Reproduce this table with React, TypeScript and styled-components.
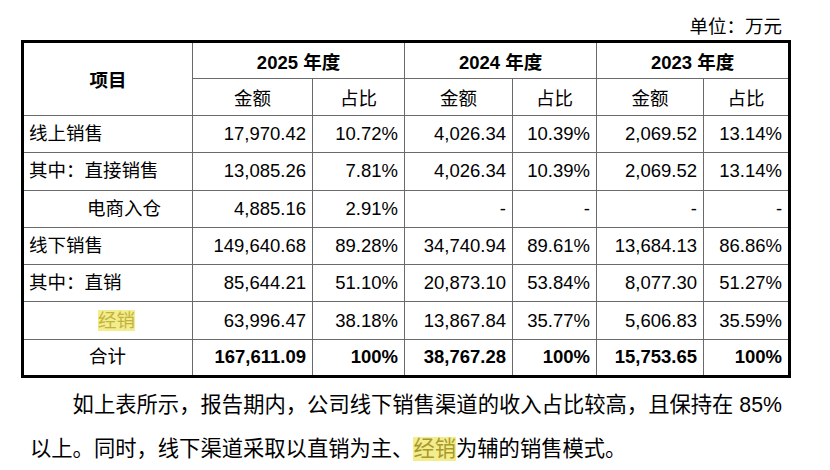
import { ReactNode } from "react";
import styled, { createGlobalStyle } from "styled-components";

type Row = {
  label: string;
  indent?: number;
  highlight?: boolean;
  center?: boolean;
  bold?: boolean;
  values: string[];
};

const rows: Row[] = [
  { label: "线上销售", values: ["17,970.42", "10.72%", "4,026.34", "10.39%", "2,069.52", "13.14%"] },
  { label: "其中：直接销售", values: ["13,085.26", "7.81%", "4,026.34", "10.39%", "2,069.52", "13.14%"] },
  { label: "电商入仓", indent: 63, values: ["4,885.16", "2.91%", "-", "-", "-", "-"] },
  { label: "线下销售", values: ["149,640.68", "89.28%", "34,740.94", "89.61%", "13,684.13", "86.86%"] },
  { label: "其中：直销", values: ["85,644.21", "51.10%", "20,873.10", "53.84%", "8,077.30", "51.27%"] },
  { label: "经销", indent: 74, highlight: true, values: ["63,996.47", "38.18%", "13,867.84", "35.77%", "5,606.83", "35.59%"] },
  { label: "合计", center: true, bold: true, values: ["167,611.09", "100%", "38,767.28", "100%", "15,753.65", "100%"] },
];

const years = ["2025", "2024", "2023"];
const widths = [170, 120, 92, 108, 84, 107, 86];

const GlobalStyle = createGlobalStyle`
  body {
    margin: 0;
    background: #ffffff;
    color: #000000;
    font-family: "Liberation Sans", "Noto Sans CJK SC", sans-serif;
  }
`;

const Page = styled.div`
  width: 830px;
  height: 470px;
  padding: 16px 0 0 21px;
  box-sizing: border-box;
  overflow: hidden;
`;

const Unit = styled.div`
  width: 761px;
  text-align: right;
  font-size: 18.5px;
  line-height: 22px;
  margin-bottom: 2px;
`;

const Table = styled.table`
  border-collapse: collapse;
  table-layout: fixed;
  width: 767px;
  border: 3px solid #000;
  font-size: 18.5px;
`;

const Cell = styled.td<{ $align?: string; $bold?: boolean; $indent?: number }>`
  border: 1px solid #6a6a6a;
  height: 37.3px;
  padding: 0 6px 0 ${(p) => (p.$indent ? p.$indent : 5)}px;
  text-align: ${(p) => p.$align || "right"};
  font-weight: ${(p) => (p.$bold ? 700 : 400)};
  white-space: nowrap;
  box-sizing: border-box;
  line-height: 22px;
`;

const HeadCell = styled.th<{ $bold?: boolean }>`
  border: 1px solid #6a6a6a;
  height: 37px;
  padding: 0;
  text-align: center;
  font-weight: ${(p) => (p.$bold ? 700 : 400)};
  box-sizing: border-box;
`;

const Mark = styled.span<{ $light?: boolean }>`
  background: #f3ed8e;
  color: ${(p) => (p.$light ? "#c2b33c" : "#a8992c")};
`;

// full-width CJK punctuation keeps a whole em, as in the source document
const Punct = styled.span`
  display: inline-block;
  width: 1em;
  text-indent: 0;
  text-align: left;
`;

const Paragraph = styled.p`
  width: 752px;
  margin: 5px 0 0 9px;
  font-size: 21.3px;
  line-height: 44px;
  text-indent: 2em;
  text-align: justify;
`;

function cjk(text: string): ReactNode[] {
  return text.split(/([：，。、])/).map((part, i) =>
    /^[：，。、]$/.test(part) ? <Punct key={i}>{part}</Punct> : part
  );
}

export default function App() {
  return (
    <Page lang="zh-CN">
      <GlobalStyle />
      <Unit>{cjk("单位：万元")}</Unit>
      <Table>
        <colgroup>
          {widths.map((w, i) => (
            <col key={i} style={{ width: w }} />
          ))}
        </colgroup>
        <thead>
          <tr>
            <HeadCell rowSpan={2} $bold>
              项目
            </HeadCell>
            {years.map((y) => (
              <HeadCell key={y} colSpan={2} $bold>
                {y} 年度
              </HeadCell>
            ))}
          </tr>
          <tr>
            {years.map((y) => [
              <HeadCell key={y + "a"}>金额</HeadCell>,
              <HeadCell key={y + "b"}>占比</HeadCell>,
            ])}
          </tr>
        </thead>
        <tbody>
          {rows.map((r) => (
            <tr key={r.label}>
              <Cell $align={r.center ? "center" : "left"} $indent={r.indent}>
                {r.highlight ? <Mark $light>{r.label}</Mark> : cjk(r.label)}
              </Cell>
              {r.values.map((v, i) => (
                <Cell key={i} $bold={r.bold}>
                  {v}
                </Cell>
              ))}
            </tr>
          ))}
        </tbody>
      </Table>
      <Paragraph>
        {cjk("如上表所示，报告期内，公司线下销售渠道的收入占比较高，且保持在 85%")}
        {cjk("以上。同时，线下渠道采取以直销为主、")}
        <Mark>经销</Mark>
        {cjk("为辅的销售模式。")}
      </Paragraph>
    </Page>
  );
}
